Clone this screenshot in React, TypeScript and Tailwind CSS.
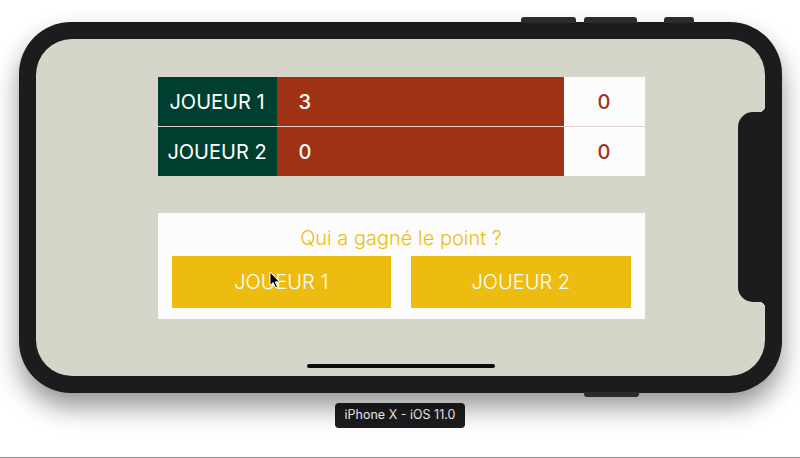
import React from 'react';

const font = { fontFamily: 'Inter, "Noto Sans", sans-serif' };

const rows = [
  { name: 'JOUEUR 1', points: '3', games: '0' },
  { name: 'JOUEUR 2', points: '0', games: '0' },
];

function Cursor() {
  return (
    <svg width="12" height="18" viewBox="0 0 12 18" className="absolute left-[269px] top-[271px]">
      <path d="M1 1 L1 14.5 L4.2 11.6 L6.6 17 L8.6 16.1 L6.3 10.9 L10.6 10.9 Z" fill="#000" stroke="#fff" strokeWidth="1" strokeLinejoin="round" />
    </svg>
  );
}

export default function App() {
  return (
    <div className="relative w-[800px] h-[458px] overflow-hidden bg-white border-b border-[#8d8d8d]" style={font}>
      <div className="flex flex-col items-center pt-[22px]">
        {/* phone body */}
        <div className="relative w-[763px] h-[371px] rounded-[52px] bg-[#1c1b1e] p-[17px] shadow-[0_14px_26px_rgba(0,0,0,0.42)]">
          <div className="absolute left-[502px] -top-[5px] w-[55px] h-[6px] rounded-t-[3px] bg-[#2b2a2d]" />
          <div className="absolute left-[565px] -top-[5px] w-[53px] h-[6px] rounded-t-[3px] bg-[#2b2a2d]" />
          <div className="absolute left-[645px] -top-[5px] w-[30px] h-[6px] rounded-t-[3px] bg-[#2b2a2d]" />
          <div className="absolute left-[565px] -bottom-[4px] w-[55px] h-[5px] rounded-b-[3px] bg-[#2b2a2d]" />

          {/* screen */}
          <div className="relative h-full rounded-[36px] bg-[#d6d5c9] flex flex-col items-center pt-[38px] pl-[2px]">
            {/* sensor housing */}
            <div className="absolute right-0 top-[73px] w-[27px] h-[190px] rounded-l-[15px] bg-[#1c1b1e]" />
            <div className="absolute right-0 top-[67px] w-[6px] h-[6px] bg-[radial-gradient(circle_at_0_0,transparent_6px,#1c1b1e_6.5px)]" />
            <div className="absolute right-0 top-[263px] w-[6px] h-[6px] bg-[radial-gradient(circle_at_0_100%,transparent_6px,#1c1b1e_6.5px)]" />

            {/* scoreboard */}
            <div className="w-[487px] flex flex-col gap-px bg-[#e3d2c9]">
              {rows.map((r) => (
                <div key={r.name} className="flex h-[49px]">
                  <div className="w-[119px] bg-[#003f2f] flex items-center justify-center text-white text-[20px]">
                    {r.name}
                  </div>
                  <div className="flex-1 bg-[#9f3214] flex items-center pl-[22px] text-white text-[20px] font-medium">
                    {r.points}
                  </div>
                  <div className="w-[81px] bg-[#fdfcfd] flex items-center justify-center text-[#9f3214] text-[20px] font-medium">
                    {r.games}
                  </div>
                </div>
              ))}
            </div>

            {/* who won the point */}
            <div className="mt-[37px] w-[487px] h-[106px] bg-[#fdfcfd] flex flex-col items-center px-[14px] pt-[12px]">
              <div className="text-[#edbd12] text-[20px] font-light leading-[26px]">Qui a gagné le point ?</div>
              <div className="mt-[5px] w-full grid grid-cols-2 gap-[20px]">
                <button className="h-[52px] bg-[#edbc10] text-white text-[20px] font-light">JOUEUR 1</button>
                <button className="h-[52px] bg-[#edbc10] text-white text-[20px] font-light">JOUEUR 2</button>
              </div>
            </div>

            <div className="mt-auto mb-[8px] w-[188px] h-[4px] rounded-full bg-[#0b0b0c]" />
          </div>
        </div>

        <div className="mt-[10px] h-[25px] px-[10px] rounded-[4px] bg-[#1d1d1f] text-white text-[12.5px] flex items-center">
          iPhone X - iOS 11.0
        </div>
      </div>
      <Cursor />
    </div>
  );
}
